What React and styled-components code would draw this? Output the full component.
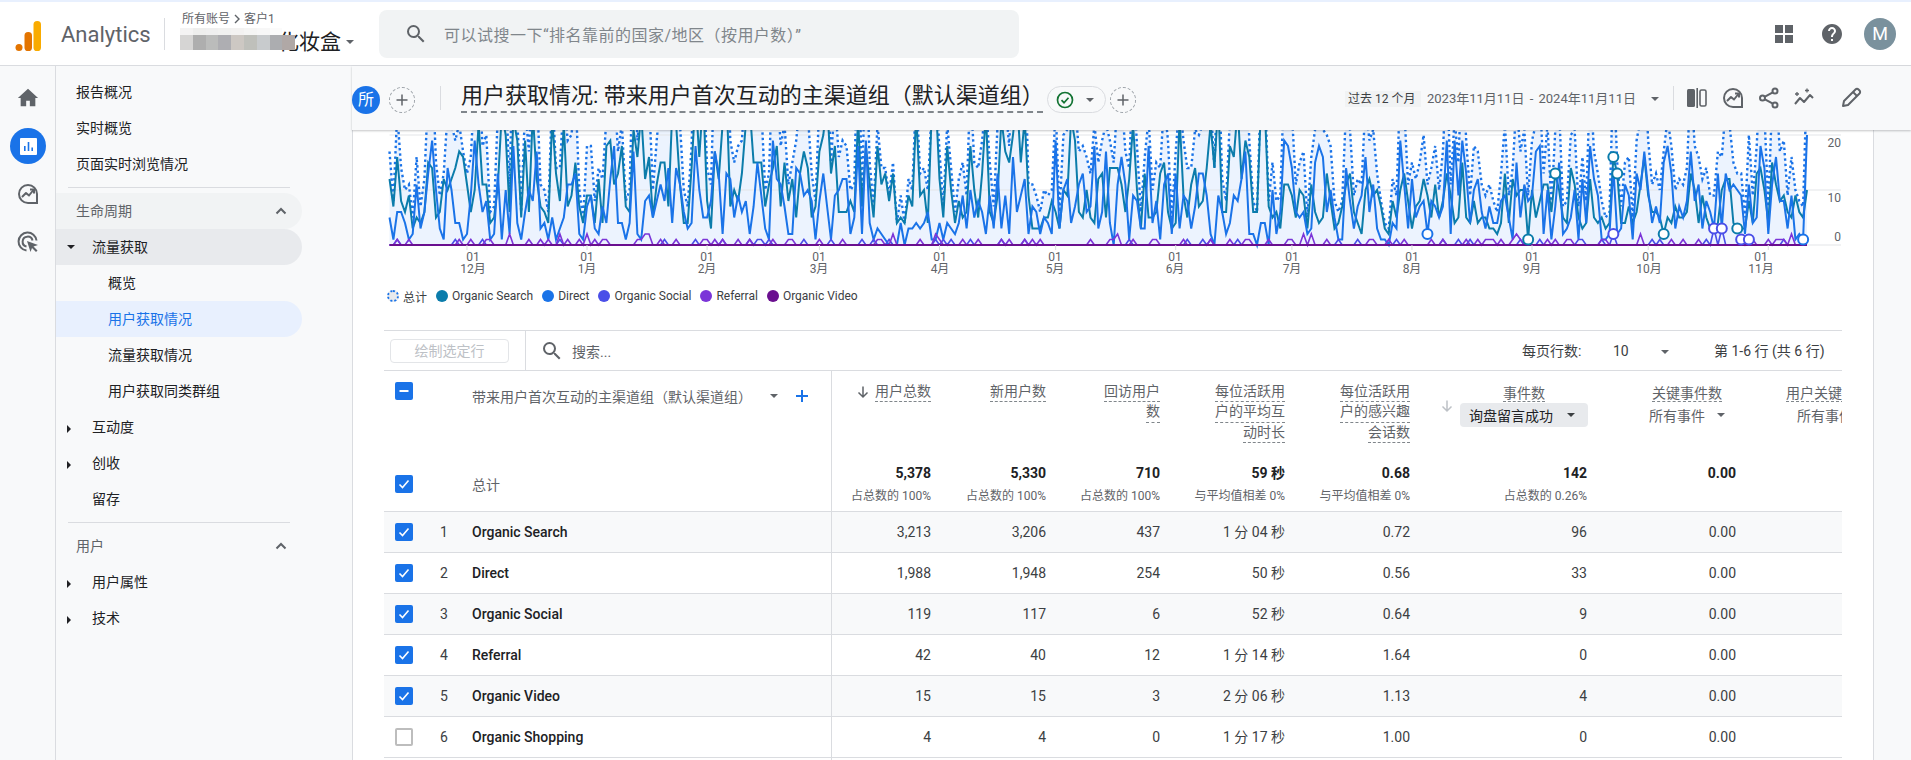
import React from "react";
import styled, { createGlobalStyle } from "styled-components";

const GlobalStyle = createGlobalStyle`
  html, body {
    margin: 0;
    padding: 0;
    background: #f8f9fa;
  }
  * {
    box-sizing: border-box;
  }
  body {
    font-family: Roboto, "Noto Sans CJK SC", sans-serif;
    font-size: 14px;
    color: #202124;
  }
`;

const Page = styled.div`
  position: relative;
  width: 1911px;
  height: 760px;
  overflow: hidden;
  background: #f8f9fa;
`;

/* top header */
const TopStrip = styled.div`
  height: 2px;
  background: #e8f0fe;
`;

const Header = styled.header`
  position: relative;
  height: 64px;
  background: #fff;
  border-bottom: 1px solid #dadce0;
`;

const LogoMark = styled.svg`
  position: absolute;
  left: 15px;
  top: 17px;
`;

const ProductName = styled.div`
  position: absolute;
  left: 61px;
  top: 17px;
  font-size: 22px;
  line-height: 32px;
  color: #5f6368;
`;

const HeaderDivider = styled.div`
  position: absolute;
  left: 164px;
  top: 16px;
  width: 1px;
  height: 32px;
  background: #dadce0;
`;

const Breadcrumb = styled.div`
  position: absolute;
  left: 182px;
  top: 9px;
  font-size: 12px;
  line-height: 16px;
  color: #5f6368;
  display: flex;
  align-items: center;
  gap: 2px;
`;

const AccountName = styled.div`
  position: absolute;
  left: 278px;
  top: 24px;
  font-size: 21px;
  line-height: 32px;
  color: #202124;
`;

const AccountCaret = styled.div`
  position: absolute;
  left: 346px;
  top: 38px;
  display: flex;
`;

const Mosaic = styled.div`
  position: absolute;
  left: 180px;
  top: 26px;
  width: 118px;
`;

const MosaicRow = styled.div`
  display: flex;
  height: ${(p) => p.$h}px;
`;

const MosaicCell = styled.div`
  width: 12.8px;
  background: ${(p) => p.$c};
`;

const SearchBox = styled.div`
  position: absolute;
  left: 379px;
  top: 8px;
  width: 640px;
  height: 48px;
  border-radius: 8px;
  background: #f1f3f4;
  display: flex;
  align-items: center;
  padding-left: 25px;
  gap: 16px;
  font-size: 16px;
  letter-spacing: 0.48px;
  color: #80868b;
`;

const HeaderIcon = styled.div`
  position: absolute;
  left: ${(p) => p.$x}px;
  top: 20px;
  width: 24px;
  height: 24px;
`;

const Avatar = styled.div`
  position: absolute;
  left: 1864px;
  top: 16px;
  width: 32px;
  height: 32px;
  border-radius: 50%;
  background: #7a919d;
  color: #fff;
  font-size: 18px;
  line-height: 32px;
  text-align: center;
`;

/* left rail */
const Rail = styled.nav`
  position: absolute;
  left: 0;
  top: 66px;
  width: 56px;
  bottom: 0;
  background: #f8f9fa;
  border-right: 1px solid #dadce0;
`;

const RailIcon = styled.div`
  position: absolute;
  left: ${(p) => (p.$active ? 10 : 17)}px;
  top: ${(p) => p.$y - 66}px;
  width: ${(p) => (p.$active ? 36 : 22)}px;
  height: ${(p) => (p.$active ? 36 : 22)}px;
  display: flex;
  align-items: center;
  justify-content: center;
  border-radius: 50%;
  background: ${(p) => (p.$active ? "#1a73e8" : "transparent")};
`;

/* report navigation */
const NavPanel = styled.aside`
  position: absolute;
  left: 56px;
  top: 66px;
  width: 297px;
  bottom: 0;
  padding-top: 8px;
  background: #f8f9fa;
  border-right: 1px solid #dadce0;
`;

const NavItem = styled.div`
  position: relative;
  width: 246px;
  height: 36px;
  padding-left: ${(p) => p.$indent}px;
  line-height: 36px;
  font-size: 14px;
  border-radius: 0 18px 18px 0;
  color: ${(p) => (p.$active ? "#1a73e8" : p.$muted ? "#5f6368" : "#202124")};
  background: ${(p) =>
    p.$active ? "#e8f0fe" : p.$open ? "#e8eaed" : p.$group ? "#f1f3f4" : "transparent"};
`;

const NavDivider = styled.div`
  width: 222px;
  height: 1px;
  margin: 5px 0 5px 12px;
  background: #dadce0;
`;

const NavCaret = styled.span`
  position: absolute;
  left: 11px;
  top: 16px;
  display: flex;
`;

const NavChevron = styled.svg`
  position: absolute;
  left: 218px;
  top: 11px;
`;

const Tri = styled.span`
  display: inline-block;
  width: 0;
  height: 0;
  ${(p) =>
    p.$dir === "right"
      ? `border-top: 4px solid transparent; border-bottom: 4px solid transparent; border-left: 4px solid ${p.$c};`
      : `border-left: 4px solid transparent; border-right: 4px solid transparent; border-top: 4px solid ${p.$c};`}
`;

/* main column */
const Main = styled.main`
  position: absolute;
  left: 353px;
  top: 66px;
  width: 1521px;
  bottom: 0;
  background: #fff;
  border-right: 1px solid #dadce0;
`;

const ReportBar = styled.div`
  position: absolute;
  left: 352px;
  top: 66px;
  right: 0;
  height: 64px;
  background: #f8f9fa;
  box-shadow: 0 1px 2px rgba(60, 64, 67, 0.3);
  z-index: 3;
`;

const SegmentBadge = styled.div`
  position: absolute;
  left: 0;
  top: 20px;
  width: 28px;
  height: 28px;
  border-radius: 50%;
  background: #1a73e8;
  color: #fff;
  font-size: 16px;
  line-height: 28px;
  text-align: center;
`;

const DashedPlus = styled.div`
  position: absolute;
  left: ${(p) => p.$x}px;
  top: 21px;
  width: 26px;
  height: 26px;
  border-radius: 50%;
  border: 1px dashed #9aa0a6;
  display: flex;
  align-items: center;
  justify-content: center;
`;

const BarDivider = styled.div`
  position: absolute;
  left: ${(p) => p.$x}px;
  top: 20px;
  width: 1px;
  height: 24px;
  background: #dadce0;
`;

const ReportTitle = styled.h1`
  position: absolute;
  left: 109px;
  top: 15px;
  width: 582px;
  height: 32px;
  margin: 0;
  font-size: 22px;
  font-weight: 400;
  line-height: 30px;
  white-space: nowrap;
  color: #202124;
  border-bottom: 2px dashed #80868b;
`;

const StatusPill = styled.div`
  position: absolute;
  left: 695px;
  top: 20px;
  width: 59px;
  height: 27px;
  border: 1px solid #dadce0;
  border-radius: 14px;
  display: flex;
  align-items: center;
  padding-left: 8px;
  gap: 12px;
`;

const RangeChip = styled.div`
  position: absolute;
  left: 993px;
  top: 25px;
  width: 76px;
  height: 16px;
  background: #f1f3f4;
  font-size: 12px;
  line-height: 16px;
  padding-left: 3px;
  white-space: nowrap;
  color: #3c4043;
`;

const DateRange = styled.div`
  position: absolute;
  left: 1075px;
  top: 23px;
  font-size: 13px;
  word-spacing: 2px;
  line-height: 20px;
  white-space: nowrap;
  color: #5f6368;
`;

const DateCaret = styled.div`
  position: absolute;
  left: 1299px;
  top: 31px;
  display: flex;
`;

const BarIcon = styled.svg`
  position: absolute;
  left: ${(p) => p.$x - 352 - 11}px;
  top: 21px;
`;

/* chart */
const ChartSvg = styled.svg`
  position: absolute;
  left: 353px;
  top: 130px;
  z-index: 1;
`;

const AxisText = styled.text`
  font-family: Roboto, "Noto Sans CJK SC", sans-serif;
  font-size: 12px;
  fill: #5f6368;
`;

const Legend = styled.div`
  position: absolute;
  left: 387px;
  top: 288px;
  height: 16px;
  display: flex;
  align-items: center;
  font-size: 12px;
  color: #3c4043;
  z-index: 1;
`;

const LegendItem = styled.div`
  display: flex;
  align-items: center;
  gap: 4px;
  margin-right: 9px;
  white-space: nowrap;
`;

const LegendDot = styled.span`
  width: 12px;
  height: 12px;
  border-radius: 50%;
  background: ${(p) => p.$c};
  ${(p) => p.$dashed && "background: #e8eaed; border: 2px dotted #1a73e8;"}
`;

/* table */
const Table = styled.section`
  position: absolute;
  left: 384px;
  top: 330px;
  width: 1458px;
  bottom: 0;
  overflow: hidden;
  z-index: 1;
  background: #fff;
`;

const Toolbar = styled.div`
  position: relative;
  height: 41px;
  border-top: 1px solid #dadce0;
  border-bottom: 1px solid #dadce0;
`;

const PlotButton = styled.div`
  position: absolute;
  left: 6px;
  top: 8px;
  width: 119px;
  height: 24px;
  border: 1px solid #e3e5e8;
  border-radius: 4px;
  font-size: 14px;
  line-height: 22px;
  text-align: center;
  color: #bdc1c6;
`;

const ToolbarDivider = styled.div`
  position: absolute;
  left: 141px;
  top: 0;
  width: 1px;
  height: 40px;
  background: #dadce0;
`;

const TableSearch = styled.div`
  position: absolute;
  left: 156px;
  top: 0;
  height: 40px;
  display: flex;
  align-items: center;
  gap: 8px;
  color: #5f6368;
`;

const Pager = styled.span`
  position: absolute;
  left: ${(p) => p.$x}px;
  top: 10px;
  font-size: 14px;
  line-height: 20px;
  white-space: nowrap;
  color: #3c4043;
`;

const PagerCaret = styled.span`
  position: absolute;
  left: 1277px;
  top: 19px;
  display: flex;
`;

const Row = styled.div`
  display: flex;
  height: ${(p) => p.$h}px;
  background: ${(p) => (p.$shade ? "#f8f9fa" : "#fff")};
  border-bottom: ${(p) => (p.$noLine ? "none" : "1px solid #dadce0")};
`;

const DimCell = styled.div`
  position: relative;
  flex: none;
  width: 448px;
  padding-left: 11px;
  padding-bottom: ${(p) => (p.$lift ? 4 : 0)}px;
  display: flex;
  align-items: ${(p) => (p.$top ? "flex-start" : "center")};
  border-right: 1px solid #dadce0;
`;

const MetricCell = styled.div`
  position: relative;
  flex: none;
  width: ${(p) => p.$w}px;
  text-align: right;
  color: #3c4043;
  line-height: 40px;
  white-space: nowrap;
`;

const Box = styled.span`
  flex: none;
  display: flex;
  align-items: center;
  justify-content: center;
  width: 18px;
  height: 18px;
  margin-top: ${(p) => p.$top || 0}px;
  border-radius: 2px;
  background: ${(p) => (p.$on ? "#1a73e8" : "#fff")};
  border: ${(p) => (p.$on ? "none" : "2px solid #bdbdbd")};
`;

const Index = styled.span`
  flex: none;
  width: 59px;
  padding-left: 3px;
  text-align: center;
  color: #3c4043;
`;

const ChannelName = styled.span`
  font-weight: 500;
  color: #202124;
`;

const TotalLabel = styled.span`
  margin-left: 59px;
  color: #5f6368;
`;

const DimHead = styled.div`
  position: absolute;
  left: 88px;
  top: 15px;
  display: flex;
  align-items: center;
  height: 20px;
  color: #5f6368;
  white-space: nowrap;
`;

const DimCaret = styled.span`
  position: absolute;
  left: 386px;
  top: 23px;
  display: flex;
`;

const DimPlus = styled.svg`
  position: absolute;
  left: 411px;
  top: 18px;
`;

const HeadCell = styled.div`
  position: relative;
  flex: none;
  width: ${(p) => p.$w}px;
  padding-top: 11px;
  text-align: right;
  white-space: nowrap;
  color: #5f6368;
`;

const HeadLine = styled.div`
  line-height: 19.4px;
  height: 20.4px;
`;

const Dashed = styled.span`
  display: inline-block;
  height: 20.4px;
  border-bottom: 1px dashed #80868b;
`;

const SortArrow = styled.svg`
  position: absolute;
  left: ${(p) => p.$x}px;
  top: ${(p) => p.$y}px;
`;

const EventHead = styled.div`
  display: inline-flex;
  flex-direction: column;
  align-items: center;
  margin-right: ${(p) => p.$right}px;
  vertical-align: top;
`;

const EventSelect = styled.div`
  display: flex;
  align-items: center;
  height: 24px;
  margin-top: 1px;
  padding: 0 ${(p) => (p.$chip ? 13 : 2)}px 0 ${(p) => (p.$chip ? 9 : 2)}px;
  gap: ${(p) => (p.$chip ? 14 : 12)}px;
  border-radius: 4px;
  background: ${(p) => (p.$chip ? "#e8eaed" : "transparent")};
  color: ${(p) => (p.$chip ? "#202124" : "#5f6368")};
`;

const TotalCell = styled.div`
  flex: none;
  width: ${(p) => p.$w}px;
  text-align: right;
  white-space: nowrap;
`;

const TotalValue = styled.div`
  height: 24px;
  line-height: 24px;
  font-weight: 700;
  font-size: 14px;
  color: #202124;
`;

const TotalSub = styled.div`
  margin-top: 2px;
  font-size: 12px;
  line-height: 18px;
  color: #5f6368;
`;

/* chart data: seeded so the picture stays the same on every load */
const DAYS = 367;
const PLOT_LEFT = 389.5;
const PLOT_STEP = 1417.5 / (DAYS - 1);
const xAt = (day) => PLOT_LEFT + day * PLOT_STEP;
const yAt = (v) => 245 - v * 5.5;

const makeSeries = () => {
  let seed = 20231111;
  const rand = () => {
    seed = (seed + 0x6d2b79f5) | 0;
    let t = Math.imul(seed ^ (seed >>> 15), 1 | seed);
    t = (t + Math.imul(t ^ (t >>> 7), 61 | t)) ^ t;
    return ((t ^ (t >>> 14)) >>> 0) / 4294967296;
  };
  const search = [];
  const direct = [];
  const social = [];
  const referral = [];
  let lastSearch = 8;
  let lastDirect = 4;
  for (let i = 0; i < DAYS; i++) {
    const week = i % 7 < 5 ? 1 : 0.65;
    const high = i < 230 ? 26 : 15;
    const nextSearch = week * (3 + Math.pow(rand(), 1.6) * high);
    const nextDirect = week * (Math.pow(rand(), 1.4) * 21);
    lastSearch = 0.15 * lastSearch + 0.85 * nextSearch;
    lastDirect = 0.1 * lastDirect + 0.9 * nextDirect;
    search.push(Math.round(lastSearch));
    direct.push(Math.round(lastDirect));
    const s = rand();
    social.push(s < 0.1 ? 1 : 0);
    const r = rand();
    referral.push(r < 0.04 ? 2 : r < 0.28 ? 1 : 0);
  }
  const spots = {
    search: [[294, 1], [301, 13], [316, 16], [317, 13], [329, 2], [348, 3]],
    direct: [[268, 2], [365, 1]],
    social: [[342, 3], [344, 3], [316, 2], [349, 1], [351, 1]],
  };
  spots.search.forEach(([d, v]) => (search[d] = v));
  spots.direct.forEach(([d, v]) => (direct[d] = v));
  spots.social.forEach(([d, v]) => (social[d] = v));
  search[366] = 10;
  const total = search.map((v, i) => v + direct[i] + social[i] + referral[i]);
  return { search, direct, social, referral, total, spots };
};

const SERIES = makeSeries();
const pointsOf = (values) => values.map((v, i) => `${xAt(i).toFixed(1)},${yAt(v).toFixed(1)}`).join(" ");

const MONTHS = [
  ["12月", 20, 473],
  ["1月", 51, 587],
  ["2月", 82, 707],
  ["3月", 111, 819],
  ["4月", 142, 940],
  ["5月", 172, 1055],
  ["6月", 203, 1175],
  ["7月", 233, 1292],
  ["8月", 264, 1412],
  ["9月", 295, 1532],
  ["10月", 325, 1649],
  ["11月", 356, 1761],
];

const COLORS = {
  search: "#0b7cab",
  direct: "#1a73e8",
  social: "#4a4fe8",
  referral: "#7b35d8",
  video: "#6a0f8f",
};

const WIDTHS = [99, 115, 114, 125, 125, 177, 149, 149];

const ROWS = [
  ["Organic Search", "3,213", "3,206", "437", "1 分 04 秒", "0.72", "96"],
  ["Direct", "1,988", "1,948", "254", "50 秒", "0.56", "33"],
  ["Organic Social", "119", "117", "6", "52 秒", "0.64", "9"],
  ["Referral", "42", "40", "12", "1 分 14 秒", "1.64", "0"],
  ["Organic Video", "15", "15", "3", "2 分 06 秒", "1.13", "4"],
  ["Organic Shopping", "4", "4", "0", "1 分 17 秒", "1.00", "0"],
];

const TOTALS = [
  ["5,378", "占总数的 100%"],
  ["5,330", "占总数的 100%"],
  ["710", "占总数的 100%"],
  ["59 秒", "与平均值相差 0%"],
  ["0.68", "与平均值相差 0%"],
  ["142", "占总数的 0.26%"],
  ["0.00", ""],
];

const HEADS = [["用户总数"], ["新用户数"], ["回访用户", "数"], ["每位活跃用", "户的平均互", "动时长"], ["每位活跃用", "户的感兴趣", "会话数"]];

const MOSAIC_TOP = ["#f4f3f3", "#eeeeed", "#efefef", "#f1f1f0", "#f3f2f1", "#f5f5f4", "#f7f7f7", "#fbfbfb"];
const MOSAIC_BOTTOM = ["#d6d5d4", "#aeaeae", "#bbbcbb", "#aeaeb2", "#cdc8c3", "#bfc0bb", "#c8cbcd", "#acadb0", "#b0a8a6"];

const InsightsIcon = ({ size = 22 }) => (
  <svg width={size} height={size} viewBox="0 0 22 22" fill="none" stroke="#5f6368" strokeWidth="2">
    <path d="M20 11a9 9 0 1 0-9 9h9z" />
    <path d="M5.5 13.5l3.5-3.5 3 2.5 4-5" strokeLinecap="round" strokeLinejoin="round" />
    <path d="M13 6.5h4v4" strokeLinejoin="round" />
  </svg>
);

const AdsIcon = () => (
  <svg width="22" height="22" viewBox="0 0 22 22" fill="none" stroke="#5f6368" strokeWidth="2">
    <path d="M9.5 19.5a9 9 0 1 1 10-10" />
    <path d="M9.5 15.5a5 5 0 1 1 6-6" />
    <path d="M10 10l11 4-4.5 1.5 4 4-1.5 1.5-4-4L13.5 21z" fill="#5f6368" stroke="none" />
  </svg>
);

const Check = () => (
  <svg width="14" height="14" viewBox="0 0 14 14" fill="none" stroke="#fff" strokeWidth="1.6">
    <path d="M2.5 7.5l3 3 6-7" />
  </svg>
);

const PlusSign = ({ color = "#5f6368", size = 14, width = 1.5 }) => (
  <svg width={size} height={size} viewBox="0 0 14 14" fill="none" stroke={color} strokeWidth={width}>
    <path d="M7 1.5v11M1.5 7h11" />
  </svg>
);

const SearchGlass = ({ size }) => (
  <svg width={size} height={size} viewBox="0 0 24 24" fill="#5f6368">
    <path d="M15.5 14h-.79l-.28-.27A6.47 6.47 0 0 0 16 9.5 6.5 6.5 0 1 0 9.5 16c1.61 0 3.09-.59 4.23-1.57l.27.28v.79l5 4.99L20.49 19l-4.99-5zm-6 0C7.01 14 5 11.99 5 9.5S7.01 5 9.5 5 14 7.01 14 9.5 11.99 14 9.5 14z" />
  </svg>
);

const Chevron = () => (
  <NavChevron width="14" height="14" viewBox="0 0 14 14" fill="none" stroke="#5f6368" strokeWidth="2">
    <path d="M2.5 9.5L7 5l4.5 4.5" />
  </NavChevron>
);

const Nav = () => (
  <NavPanel>
    <NavItem $indent={20}>报告概况</NavItem>
    <NavItem $indent={20}>实时概览</NavItem>
    <NavItem $indent={20}>页面实时浏览情况</NavItem>
    <NavDivider />
    <NavItem $indent={20} $group $muted>
      生命周期
      <Chevron />
    </NavItem>
    <NavItem $indent={36} $open>
      <NavCaret>
        <Tri $c="#202124" />
      </NavCaret>
      流量获取
    </NavItem>
    <NavItem $indent={52}>概览</NavItem>
    <NavItem $indent={52} $active>
      用户获取情况
    </NavItem>
    <NavItem $indent={52}>流量获取情况</NavItem>
    <NavItem $indent={52}>用户获取同类群组</NavItem>
    <NavItem $indent={36}>
      <NavCaret>
        <Tri $dir="right" $c="#202124" />
      </NavCaret>
      互动度
    </NavItem>
    <NavItem $indent={36}>
      <NavCaret>
        <Tri $dir="right" $c="#202124" />
      </NavCaret>
      创收
    </NavItem>
    <NavItem $indent={36}>留存</NavItem>
    <NavDivider />
    <NavItem $indent={20} $muted>
      用户
      <Chevron />
    </NavItem>
    <NavItem $indent={36}>
      <NavCaret>
        <Tri $dir="right" $c="#202124" />
      </NavCaret>
      用户属性
    </NavItem>
    <NavItem $indent={36}>
      <NavCaret>
        <Tri $dir="right" $c="#202124" />
      </NavCaret>
      技术
    </NavItem>
  </NavPanel>
);

const Chart = () => (
  <ChartSvg width="1521" height="150" viewBox="353 130 1521 150" fill="none">
    <polygon points={`${PLOT_LEFT},245 ${pointsOf(SERIES.total)} ${xAt(DAYS - 1)},245`} fill="#ecf3fe" />
    {[135, 190, 245].map((y) => (
      <line key={y} x1={PLOT_LEFT} x2="1841" y1={y} y2={y} stroke="#e3e5e8" />
    ))}
    <polyline points={pointsOf(SERIES.total)} stroke={COLORS.direct} strokeWidth="2.4" strokeDasharray="2.4 3" />
    <polyline points={pointsOf(SERIES.search)} stroke={COLORS.search} strokeWidth="2" />
    <polyline points={pointsOf(SERIES.direct)} stroke={COLORS.direct} strokeWidth="2" />
    <polyline points={pointsOf(SERIES.social)} stroke={COLORS.social} strokeWidth="1.6" />
    <polyline points={pointsOf(SERIES.referral)} stroke={COLORS.referral} strokeWidth="1.6" />
    <line x1={PLOT_LEFT} x2={xAt(DAYS - 1)} y1="245" y2="245" stroke={COLORS.video} strokeWidth="2" />
    {Object.entries(SERIES.spots).map(([name, list]) =>
      list.map(([d, v]) => (
        <circle key={name + d} cx={xAt(d)} cy={yAt(v)} r="5" fill="#fff" stroke={COLORS[name]} strokeWidth="2" />
      ))
    )}
    {MONTHS.map(([label, day, cx]) => (
      <g key={label}>
        <line x1={xAt(day)} x2={xAt(day)} y1="245" y2="250" stroke="#dadce0" />
        <AxisText x={cx} y="261" textAnchor="middle">
          01
        </AxisText>
        <AxisText x={cx} y="273" textAnchor="middle">
          {label}
        </AxisText>
      </g>
    ))}
    <AxisText x="1841" y="147" textAnchor="end">
      20
    </AxisText>
    <AxisText x="1841" y="202" textAnchor="end">
      10
    </AxisText>
    <AxisText x="1841" y="241" textAnchor="end">
      0
    </AxisText>
  </ChartSvg>
);

const ReportTable = () => (
  <Table>
    <Toolbar>
      <PlotButton>绘制选定行</PlotButton>
      <ToolbarDivider />
      <TableSearch>
        <SearchGlass size={24} />
        搜索...
      </TableSearch>
      <Pager $x={1138}>每页行数:</Pager>
      <Pager $x={1229}>10</Pager>
      <PagerCaret>
        <Tri $c="#5f6368" />
      </PagerCaret>
      <Pager $x={1330}>第 1-6 行 (共 6 行)</Pager>
    </Toolbar>
    <Row $h={90} $noLine>
      <DimCell $top>
        <Box $on $top={11}>
          <svg width="12" height="12" viewBox="0 0 12 12">
            <path d="M1.5 6h9" stroke="#fff" strokeWidth="2" />
          </svg>
        </Box>
        <DimHead>带来用户首次互动的主渠道组（默认渠道组）</DimHead>
        <DimCaret>
          <Tri $c="#5f6368" />
        </DimCaret>
        <DimPlus width="14" height="14" viewBox="0 0 14 14" fill="none" stroke="#1a73e8" strokeWidth="2">
          <path d="M7 1v12M1 7h12" />
        </DimPlus>
      </DimCell>
      {HEADS.map((lines, i) => (
        <HeadCell key={i} $w={WIDTHS[i]}>
          {i === 0 && (
            <SortArrow $x={24} $y={14} width="14" height="14" viewBox="0 0 14 14" fill="none" stroke="#5f6368" strokeWidth="1.5">
              <path d="M7 1.5v10.5M2.5 7.5L7 12l4.5-4.5" />
            </SortArrow>
          )}
          {lines.map((line) => (
            <HeadLine key={line}>
              <Dashed>{line}</Dashed>
            </HeadLine>
          ))}
        </HeadCell>
      ))}
      <HeadCell $w={WIDTHS[5]}>
        <SortArrow $x={30} $y={28} width="14" height="14" viewBox="0 0 14 14" fill="none" stroke="#bdc1c6" strokeWidth="1.5">
          <path d="M7 1.5v10.5M2.5 7.5L7 12l4.5-4.5" />
        </SortArrow>
        <EventHead $right={-1}>
          <Dashed>事件数</Dashed>
          <EventSelect $chip>
            询盘留言成功
            <Tri $c="#3c4043" />
          </EventSelect>
        </EventHead>
      </HeadCell>
      <HeadCell $w={WIDTHS[6]}>
        <EventHead $right={9}>
          <Dashed>关键事件数</Dashed>
          <EventSelect>
            所有事件
            <Tri $c="#5f6368" />
          </EventSelect>
        </EventHead>
      </HeadCell>
      <HeadCell $w={WIDTHS[7]}>
        <EventHead $right={1}>
          <Dashed>用户关键事件数</Dashed>
          <EventSelect>
            所有事件
            <Tri $c="#5f6368" />
          </EventSelect>
        </EventHead>
      </HeadCell>
    </Row>
    <Row $h={51}>
      <DimCell $lift>
        <Box $on>
          <Check />
        </Box>
        <TotalLabel>总计</TotalLabel>
      </DimCell>
      {TOTALS.map(([value, sub], i) => (
        <TotalCell key={i} $w={WIDTHS[i]}>
          <TotalValue>{value}</TotalValue>
          <TotalSub>{sub}</TotalSub>
        </TotalCell>
      ))}
    </Row>
    {ROWS.map(([name, ...values], i) => (
      <Row key={name} $h={41} $shade={i % 2 === 0}>
        <DimCell>
          <Box $on={i < 5}>{i < 5 && <Check />}</Box>
          <Index>{i + 1}</Index>
          <ChannelName>{name}</ChannelName>
        </DimCell>
        {values.map((v, j) => (
          <MetricCell key={j} $w={WIDTHS[j]}>
            {v}
          </MetricCell>
        ))}
        <MetricCell $w={WIDTHS[6]}>0.00</MetricCell>
      </Row>
    ))}
    <Row $h={10} $noLine>
      <DimCell />
    </Row>
  </Table>
);

const App = () => (
  <>
    <GlobalStyle />
    <Page>
      <TopStrip />
      <Header>
        <LogoMark width="28" height="32" viewBox="0 0 28 32">
          <circle cx="4" cy="28.5" r="3.5" fill="#e37400" />
          <rect x="9.5" y="13" width="7.5" height="19" rx="3.6" fill="#e37400" />
          <rect x="18.5" y="2" width="7.5" height="30" rx="3.6" fill="#f9ab00" />
        </LogoMark>
        <ProductName>Analytics</ProductName>
        <HeaderDivider />
        <Breadcrumb>
          所有账号
          <svg width="10" height="10" viewBox="0 0 10 10" fill="none" stroke="#5f6368" strokeWidth="1.4">
            <path d="M3 1l4 4-4 4" />
          </svg>
          客户1
        </Breadcrumb>
        <AccountName>化妆盒</AccountName>
        <Mosaic>
          <MosaicRow $h={7}>
            {MOSAIC_TOP.map((c, i) => (
              <MosaicCell key={i} $c={c} />
            ))}
          </MosaicRow>
          <MosaicRow $h={15}>
            {MOSAIC_BOTTOM.map((c, i) => (
              <MosaicCell key={i} $c={c} />
            ))}
          </MosaicRow>
        </Mosaic>
        <AccountCaret>
          <Tri $c="#5f6368" />
        </AccountCaret>
        <SearchBox>
          <SearchGlass size={24} />
          可以试搜一下“排名靠前的国家/地区（按用户数）”
        </SearchBox>
        <HeaderIcon $x={1772}>
          <svg width="24" height="24" viewBox="0 0 24 24" fill="#5f6368">
            <rect x="3" y="3" width="8" height="8" />
            <rect x="13" y="3" width="8" height="8" />
            <rect x="3" y="13" width="8" height="8" />
            <rect x="13" y="13" width="8" height="8" />
          </svg>
        </HeaderIcon>
        <HeaderIcon $x={1820}>
          <svg width="24" height="24" viewBox="0 0 24 24" fill="#5f6368">
            <path d="M12 2C6.48 2 2 6.48 2 12s4.48 10 10 10 10-4.48 10-10S17.52 2 12 2zm1 17h-2v-2h2v2zm2.07-7.75l-.9.92C13.45 12.9 13 13.5 13 15h-2v-.5c0-1.1.45-2.1 1.17-2.83l1.24-1.26c.37-.36.59-.86.59-1.41 0-1.1-.9-2-2-2s-2 .9-2 2H8c0-2.21 1.79-4 4-4s4 1.79 4 4c0 .88-.36 1.68-.93 2.25z" />
          </svg>
        </HeaderIcon>
        <Avatar>M</Avatar>
      </Header>
      <Rail>
        <RailIcon $y={87}>
          <svg width="22" height="22" viewBox="0 0 24 24" fill="#5f6368">
            <path d="M10 21v-6h4v6h6v-9h3L12 2 1 12h3v9z" />
          </svg>
        </RailIcon>
        <RailIcon $y={128} $active>
          <svg width="17" height="17" viewBox="0 0 17 17">
            <rect width="17" height="17" rx="1" fill="#fff" />
            <rect x="4" y="8" width="1.6" height="5" fill="#1a73e8" />
            <rect x="7.7" y="4" width="1.6" height="9" fill="#1a73e8" />
            <rect x="11.4" y="9.5" width="1.6" height="3.5" fill="#1a73e8" />
          </svg>
        </RailIcon>
        <RailIcon $y={183}>
          <InsightsIcon />
        </RailIcon>
        <RailIcon $y={231}>
          <AdsIcon />
        </RailIcon>
      </Rail>
      <Nav />
      <Main />
      <Chart />
      <Legend>
        <LegendItem>
          <LegendDot $dashed />
          总计
        </LegendItem>
        <LegendItem>
          <LegendDot $c={COLORS.search} />
          Organic Search
        </LegendItem>
        <LegendItem>
          <LegendDot $c={COLORS.direct} />
          Direct
        </LegendItem>
        <LegendItem>
          <LegendDot $c={COLORS.social} />
          Organic Social
        </LegendItem>
        <LegendItem>
          <LegendDot $c={COLORS.referral} />
          Referral
        </LegendItem>
        <LegendItem>
          <LegendDot $c={COLORS.video} />
          Organic Video
        </LegendItem>
      </Legend>
      <ReportTable />
      <ReportBar>
        <SegmentBadge>所</SegmentBadge>
        <DashedPlus $x={37}>
          <PlusSign />
        </DashedPlus>
        <BarDivider $x={88} />
        <ReportTitle>用户获取情况: 带来用户首次互动的主渠道组（默认渠道组）</ReportTitle>
        <StatusPill>
          <svg width="18" height="18" viewBox="0 0 18 18" fill="none" stroke="#137333" strokeWidth="1.7">
            <circle cx="9" cy="9" r="7.5" />
            <path d="M5.5 9.2l2.5 2.5 4.5-5" />
          </svg>
          <Tri $c="#5f6368" />
        </StatusPill>
        <DashedPlus $x={758}>
          <PlusSign />
        </DashedPlus>
        <RangeChip>过去 12 个月</RangeChip>
        <DateRange>2023年11月11日 - 2024年11月11日</DateRange>
        <DateCaret>
          <Tri $c="#5f6368" />
        </DateCaret>
        <BarDivider $x={1321} />
        <BarIcon $x={1697} width="22" height="22" viewBox="0 0 22 22" fill="#5f6368">
          <rect x="1" y="2" width="8" height="18" rx="1.5" />
          <rect x="10.4" y="1" width="1.6" height="20" />
          <rect x="14" y="3" width="6" height="16" rx="1.5" fill="none" stroke="#5f6368" strokeWidth="1.6" />
        </BarIcon>
        <BarIcon $x={1733} width="22" height="22" viewBox="0 0 22 22">
          <InsightsIcon />
        </BarIcon>
        <BarIcon $x={1769} width="22" height="22" viewBox="0 0 22 22" fill="none" stroke="#5f6368" strokeWidth="2">
          <circle cx="17" cy="4" r="2.5" />
          <circle cx="4.5" cy="11" r="2.5" />
          <circle cx="17" cy="18" r="2.5" />
          <path d="M7 9.7l7.8-4.4M7 12.3l7.8 4.4" />
        </BarIcon>
        <BarIcon $x={1804} width="22" height="22" viewBox="0 0 22 22" fill="none" stroke="#5f6368" strokeWidth="2">
          <path d="M2 17l5-6 4 4 6-7 3 3" strokeLinejoin="round" />
          <path d="M4 5v4M2 7h4M14 1.5v4M12 3.5h4" strokeWidth="1.3" />
        </BarIcon>
        <BarIcon $x={1851} width="22" height="22" viewBox="0 0 22 22" fill="none" stroke="#5f6368" strokeWidth="2">
          <path d="M3 19l1-5L15.5 2.5a2.1 2.1 0 0 1 3 0l1 1a2.1 2.1 0 0 1 0 3L8 18z" strokeLinejoin="round" />
          <path d="M13 5l4 4" />
        </BarIcon>
      </ReportBar>
    </Page>
  </>
);

export default App;
